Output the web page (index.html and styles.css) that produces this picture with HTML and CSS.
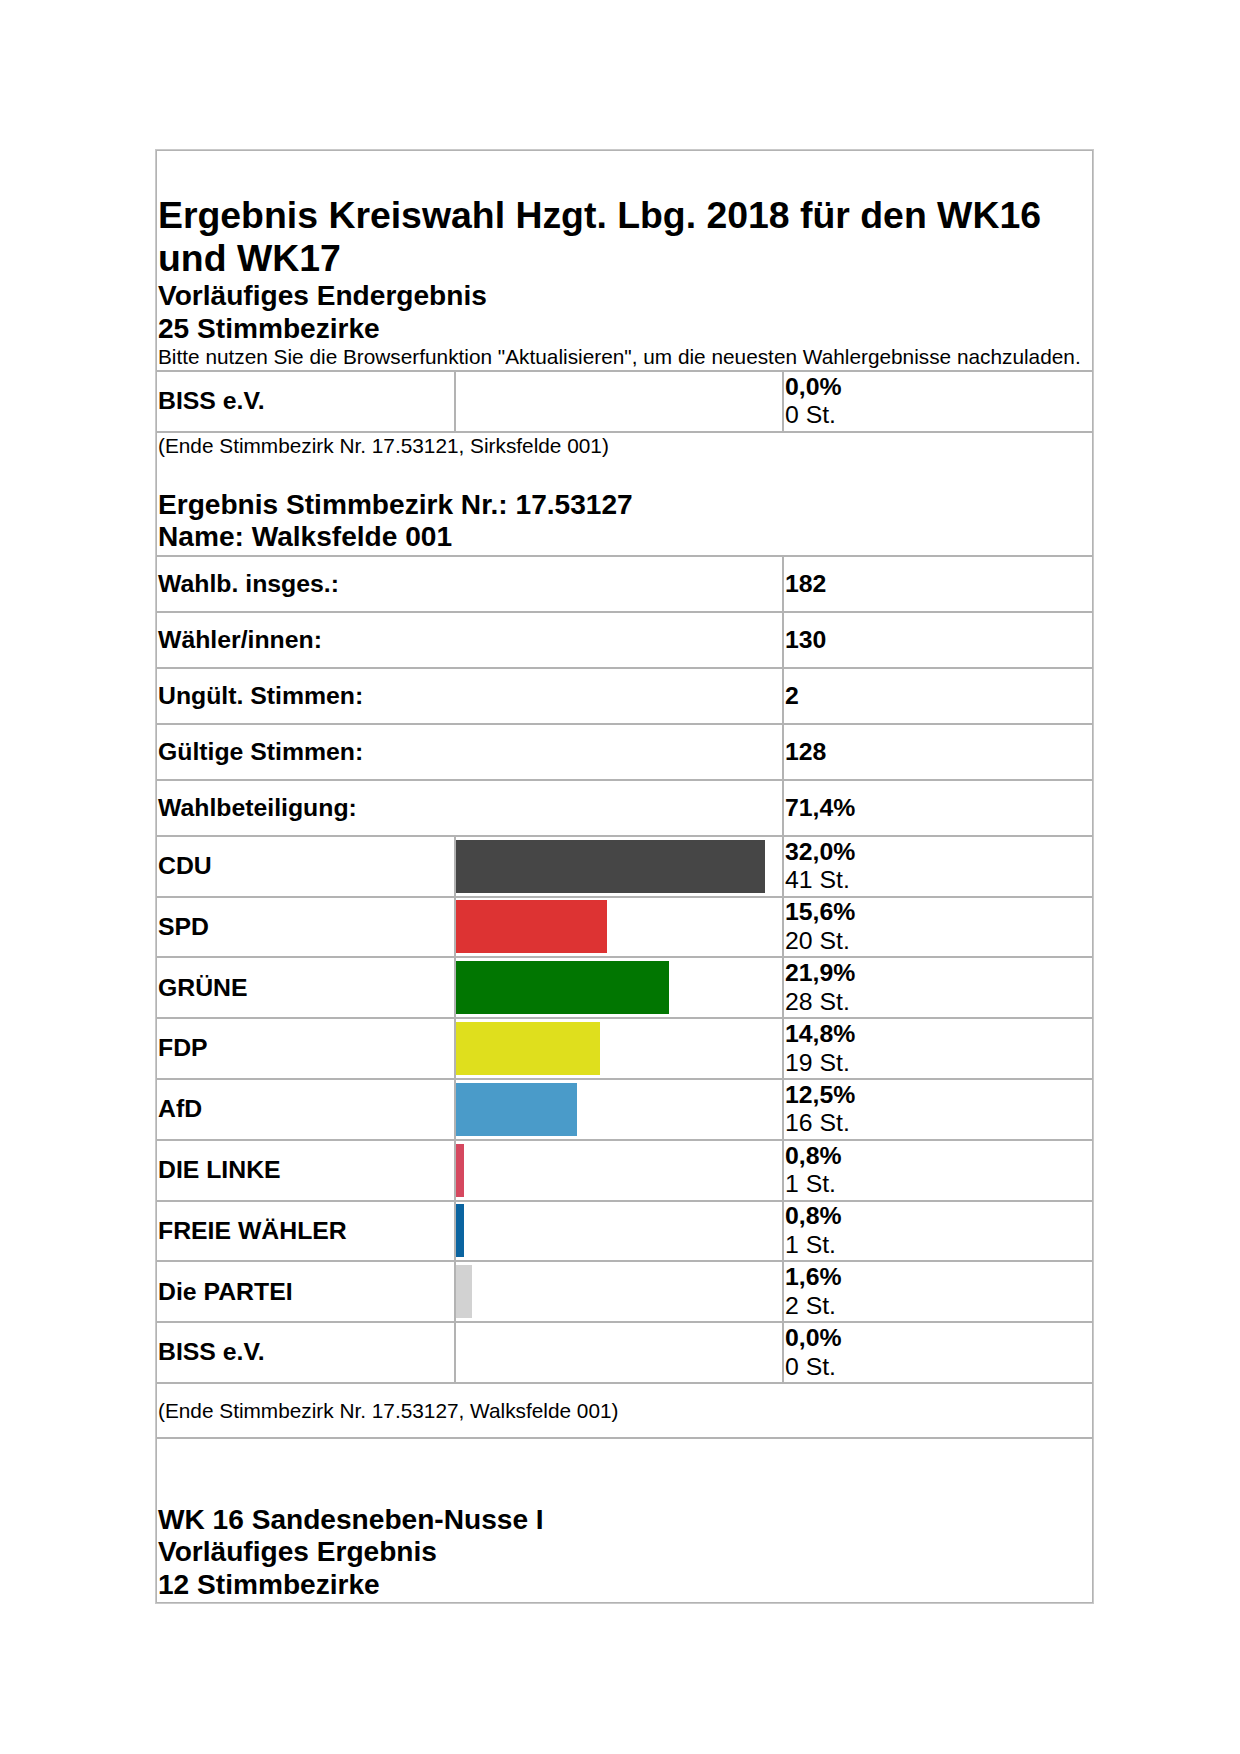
FILE: index.html
```html
<!DOCTYPE html>
<html lang="de">
<head>
<meta charset="utf-8">
<title>Ergebnis Kreiswahl</title>
<link rel="stylesheet" href="styles.css">
</head>
<body>
<div class="page">
  <div class="results">
    <div class="cell span3 head">
      <div class="title">Ergebnis Kreiswahl Hzgt. Lbg. 2018 für den WK16 und WK17</div>
      <div class="sub">Vorläufiges Endergebnis<br>25 Stimmbezirke</div>
      <div class="note">Bitte nutzen Sie die Browserfunktion "Aktualisieren", um die neuesten Wahlergebnisse nachzuladen.</div>
    </div>

    <div class="cell label r-party">BISS e.V.</div>
    <div class="cell barcell r-party"></div>
    <div class="cell val r-party"><b>0,0%</b><span>0 St.</span></div>

    <div class="cell span3 district">
      <div class="note">(Ende Stimmbezirk Nr. 17.53121, Sirksfelde 001)</div>
      <div class="sub">Ergebnis Stimmbezirk Nr.: 17.53127<br>Name: Walksfelde 001</div>
    </div>

    <div class="cell span2 label r-stat">Wahlb. insges.:</div><div class="cell stat r-stat">182</div>
    <div class="cell span2 label r-stat">Wähler/innen:</div><div class="cell stat r-stat">130</div>
    <div class="cell span2 label r-stat">Ungült. Stimmen:</div><div class="cell stat r-stat">2</div>
    <div class="cell span2 label r-stat">Gültige Stimmen:</div><div class="cell stat r-stat">128</div>
    <div class="cell span2 label r-stat">Wahlbeteiligung:</div><div class="cell stat r-stat">71,4%</div>

    <div class="cell label r-party">CDU</div>
    <div class="cell barcell r-party"><div class="bar cdu" style="width:309px"></div></div>
    <div class="cell val r-party"><b>32,0%</b><span>41 St.</span></div>

    <div class="cell label r-party">SPD</div>
    <div class="cell barcell r-party"><div class="bar spd" style="width:150.7px"></div></div>
    <div class="cell val r-party"><b>15,6%</b><span>20 St.</span></div>

    <div class="cell label r-party">GRÜNE</div>
    <div class="cell barcell r-party"><div class="bar gruene" style="width:212.5px"></div></div>
    <div class="cell val r-party"><b>21,9%</b><span>28 St.</span></div>

    <div class="cell label r-party">FDP</div>
    <div class="cell barcell r-party"><div class="bar fdp" style="width:144px"></div></div>
    <div class="cell val r-party"><b>14,8%</b><span>19 St.</span></div>

    <div class="cell label r-party">AfD</div>
    <div class="cell barcell r-party"><div class="bar afd" style="width:121px"></div></div>
    <div class="cell val r-party"><b>12,5%</b><span>16 St.</span></div>

    <div class="cell label r-party">DIE LINKE</div>
    <div class="cell barcell r-party"><div class="bar linke" style="width:7.7px"></div></div>
    <div class="cell val r-party"><b>0,8%</b><span>1 St.</span></div>

    <div class="cell label r-party">FREIE WÄHLER</div>
    <div class="cell barcell r-party"><div class="bar fw" style="width:7.7px"></div></div>
    <div class="cell val r-party"><b>0,8%</b><span>1 St.</span></div>

    <div class="cell label r-party">Die PARTEI</div>
    <div class="cell barcell r-party"><div class="bar partei" style="width:15.5px"></div></div>
    <div class="cell val r-party"><b>1,6%</b><span>2 St.</span></div>

    <div class="cell label r-party">BISS e.V.</div>
    <div class="cell barcell r-party"></div>
    <div class="cell val r-party"><b>0,0%</b><span>0 St.</span></div>

    <div class="cell span3 endrow">
      <div class="note">(Ende Stimmbezirk Nr. 17.53127, Walksfelde 001)</div>
    </div>

    <div class="cell span3 wk">
      <div class="sub">WK 16 Sandesneben-Nusse I<br>Vorläufiges Ergebnis<br>12 Stimmbezirke</div>
    </div>
  </div>
</div>
</body>
</html>
```
FILE: styles.css
```css
html, body {
  margin: 0;
  padding: 0;
  background: #ffffff;
}

body {
  font-family: "Liberation Sans", Arial, Helvetica, sans-serif;
  color: #000000;
}

.page {
  padding: 149px 0 0 155px;
  width: 939px;
}

.results {
  display: grid;
  grid-template-columns: 299px 328px 310px;
  border: 1px solid #c9c9c9;
  width: 937px;
}

.cell {
  box-sizing: border-box;
  border: 1px solid #b3b3b3;
  padding: 1px;
  overflow: hidden;
}

.span3 { grid-column: 1 / span 3; }
.span2 { grid-column: 1 / span 2; }

.head {
  height: 221px;
  display: flex;
  flex-direction: column;
  justify-content: flex-end;
}

.title {
  font-size: 37.4px;
  font-weight: bold;
  line-height: 43px;
}

.sub {
  font-size: 28.1px;
  font-weight: bold;
  line-height: 32.4px;
}

.note {
  font-size: 20.8px;
  line-height: 23.9px;
  white-space: nowrap;
}

.district {
  height: 124px;
  display: flex;
  flex-direction: column;
  justify-content: space-between;
}

.label {
  font-size: 24.8px;
  font-weight: bold;
  display: flex;
  align-items: center;
  line-height: 28.5px;
}

.r-stat { height: 56px; }
.r-party { height: 60.8px; }

.stat {
  font-size: 24.8px;
  font-weight: bold;
  display: flex;
  align-items: center;
  line-height: 28.5px;
}

.barcell {
  padding: 0;
  display: flex;
  align-items: center;
}

.bar {
  height: 53px;
}

.val {
  display: flex;
  flex-direction: column;
  justify-content: center;
  font-size: 24.8px;
  line-height: 28.5px;
  padding: 0 1px;
}

.val b { font-weight: bold; }

.cdu { background: #464646; }
.spd { background: #dd3333; }
.gruene { background: #017601; }
.fdp { background: #dfdf1d; }
.afd { background: #4a9bc9; }
.linke { background: #d5485f; }
.fw { background: #0b64a0; }
.partei { background: #d2d2d2; }

.endrow {
  height: 55px;
  display: flex;
  align-items: center;
}

.wk {
  height: 165px;
  display: flex;
  flex-direction: column;
  justify-content: flex-end;
}
```
